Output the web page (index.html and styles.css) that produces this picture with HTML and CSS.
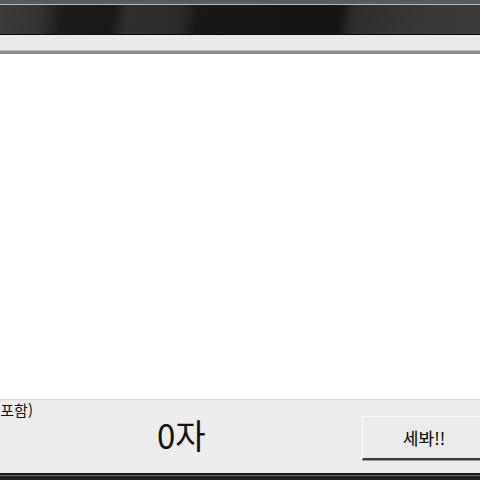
FILE: index.html
```html
<!DOCTYPE html>
<html lang="ko">
<head>
  <meta charset="UTF-8">
  <title>글자수 세기</title>
  <link rel="stylesheet" href="styles.css">
</head>
<body>
  <div class="window">
    <div class="frame-top"></div>
    <div class="titlebar"></div>
    <div class="menubar"></div>

    <!-- 입력 영역 -->
    <textarea class="editor" id="editor"></textarea>

    <!-- 하단 상태 영역 -->
    <div class="statusbar">
      <div class="label">글자수 (공백 포함)</div>
      <div class="count" id="count">0자</div>
      <button class="count-btn" onclick="countChars()">세봐!!</button>
    </div>
    <div class="frame-bottom"></div>
  </div>

  <script>
    function countChars() {
      const text = document.getElementById("editor").value;
      document.getElementById("count").textContent = text.length + "자";
    }
  </script>
</body>
</html>
```

FILE: styles.css
```css
body {
  margin: 0;
  width: 480px;
  height: 480px;
  overflow: hidden;
  font-family: "Noto Sans CJK KR", "Liberation Sans", sans-serif;
}

.window {
  display: flex;
  flex-direction: column;
  height: 480px;
}

.frame-top {
  height: 4px;
  background: #565b61;
  border-bottom: 1px solid #b8bcc0;
}

.titlebar {
  height: 29px;
  border-bottom: 1px solid #0c0c0c;
  background: linear-gradient(100deg,
    #3c3c3c 0px, #343434 40px, #1d1d1d 62px, #181818 112px,
    #2f2f2f 128px, #2a2a2a 180px, #181818 198px, #141414 335px,
    #2e2e2e 352px, #383838 420px, #3b3b3b 480px);
}

.menubar {
  height: 16px;
  background: #e9e9e9;
  border-bottom: 3px solid #8a8a8a;
  box-shadow: inset 0 -1px 0 #bdbdbd;
}

.editor {
  flex: 1;
  margin: 0;
  padding: 0;
  border: none;
  border-bottom: 1px solid #d8d8d8;
  resize: none;
  outline: none;
  background: #fff;
}

.statusbar {
  height: 73px;
  background: #ececec;
  display: flex;
  align-items: flex-start;
  margin-left: -96px;
  margin-right: -6px;
}

.label {
  width: 129px;
  flex-shrink: 0;
  text-align: right;
  font-size: 15px;
  line-height: 17px;
  padding-top: 1px;
  white-space: nowrap;
  color: #111;
}

.count {
  width: 80px;
  flex-shrink: 0;
  margin-left: 124px;
  font-size: 33px;
  line-height: 36px;
  padding-top: 16px;
  color: #111;
  transform: scaleY(1.05);
}

.count-btn {
  flex-shrink: 0;
  margin-left: 125px;
  margin-top: 16px;
  width: 124px;
  height: 44px;
  background: #ebebeb;
  border: 1px solid #fafafa;
  border-bottom: 2px solid #3c3c3c;
  box-shadow: 0 1px 0 #9a9a9a;
  font-family: "Noto Sans CJK KR", sans-serif;
  font-size: 17px;
  color: #000;
  padding: 0;
}

.frame-bottom {
  height: 7px;
  background: linear-gradient(180deg,
    #1a1a1a 0px, #1a1a1a 2px, #6a6a6a 2px, #6a6a6a 3px,
    #222 3px, #222 7px);
}
```
